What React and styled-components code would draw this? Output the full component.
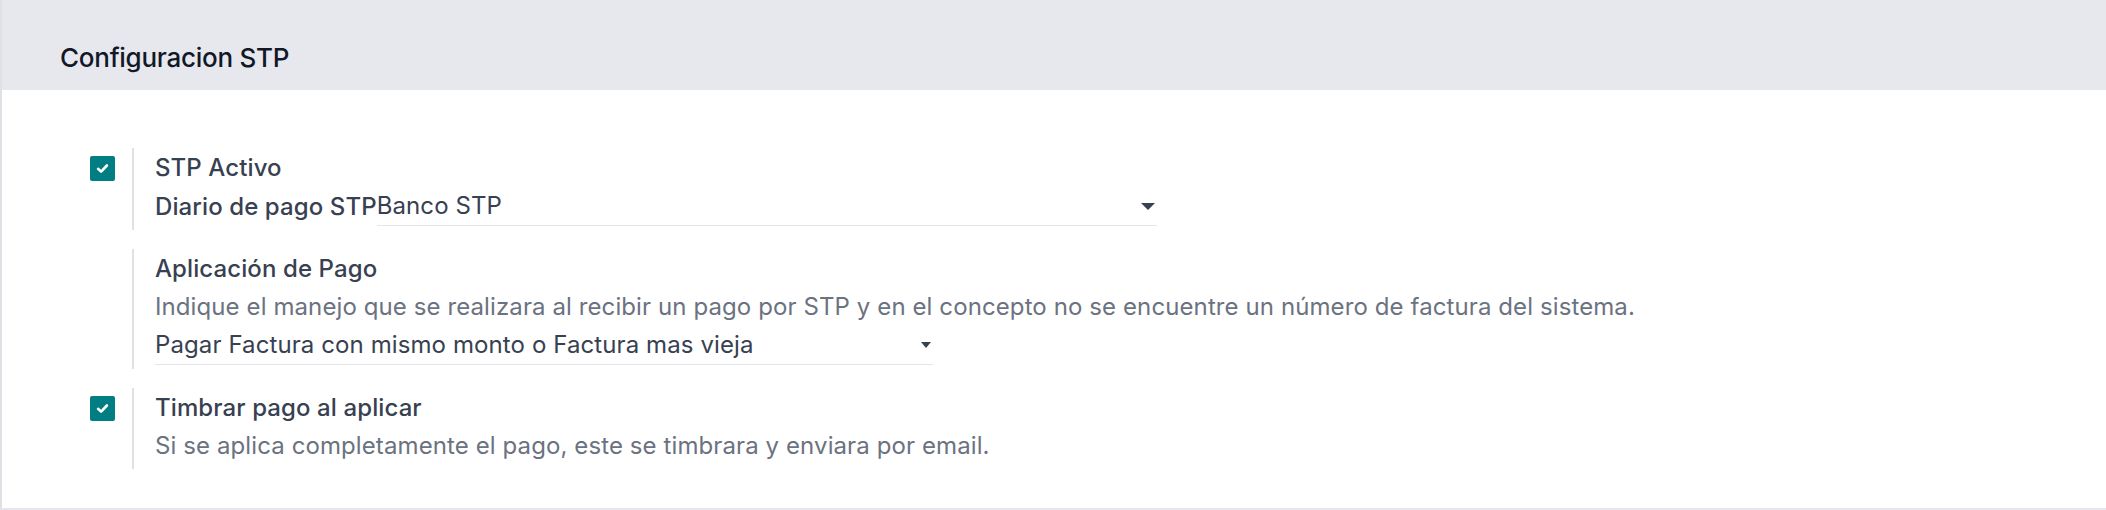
import styled, { createGlobalStyle } from "styled-components";

const GlobalStyle = createGlobalStyle`
  html, body {
    margin: 0;
    padding: 0;
    background: #ffffff;
  }
  body {
    font-family: Inter, "Noto Sans", "Liberation Sans", sans-serif;
    -webkit-font-smoothing: antialiased;
  }
`;

const settings = [
  {
    id: "stp_active",
    checkbox: true,
    label: "STP Activo",
    field: { label: "Diario de pago STP", value: "Banco STP" },
  },
  {
    id: "payment_app",
    checkbox: false,
    label: "Aplicación de Pago",
    help: "Indique el manejo que se realizara al recibir un pago por STP y en el concepto no se encuentre un número de factura del sistema.",
    select: "Pagar Factura con mismo monto o Factura mas vieja",
  },
  {
    id: "stamp_payment",
    checkbox: true,
    label: "Timbrar pago al aplicar",
    help: "Si se aplica completamente el pago, este se timbrara y enviara por email.",
  },
];

const CheckIcon = () => (
  <svg width="15" height="15" viewBox="0 0 16 16" fill="none">
    <path
      d="M3.3 8.3 6.5 11.3 12.7 4.8"
      stroke="#ffffff"
      strokeWidth="2.8"
      strokeLinecap="round"
      strokeLinejoin="round"
    />
  </svg>
);

const App = () => {
  return (
    <>
      <GlobalStyle />
      <Panel>
        <Header>
          <Title>Configuracion STP</Title>
        </Header>
        <Body>
          {settings.map((s) => (
            <SettingBox key={s.id}>
              <LeftPane>
                {s.checkbox && (
                  <Checkbox>
                    <CheckIcon />
                  </Checkbox>
                )}
              </LeftPane>
              <RightPane>
                <Label>{s.label}</Label>
                {s.help && <Help>{s.help}</Help>}
                {s.field && (
                  <FieldRow>
                    <FieldLabel>{s.field.label}</FieldLabel>
                    <Select $width={780}>
                      <SelectValue>{s.field.value}</SelectValue>
                      <Caret />
                    </Select>
                  </FieldRow>
                )}
                {s.select && (
                  <FieldRow>
                    <Select $width={778}>
                      <SelectValue>{s.select}</SelectValue>
                      <Caret $small />
                    </Select>
                  </FieldRow>
                )}
              </RightPane>
            </SettingBox>
          ))}
        </Body>
      </Panel>
    </>
  );
};

export default App;

const Panel = styled.div`
  box-sizing: border-box;
  height: 510px;
  border-left: 2px solid #dfe1e6;
  border-bottom: 2px solid #e6e6ee;
  display: flex;
  flex-direction: column;
`;

const Header = styled.div`
  box-sizing: border-box;
  height: 90px;
  background: #e7e8ee;
  padding: 42px 0 0 58px;
`;

const Title = styled.div`
  font-size: 26px;
  line-height: 31px;
  font-weight: 500;
  color: #111827;
  letter-spacing: -0.01em;
`;

const Body = styled.div`
  padding: 58px 0 0 58px;
  display: flex;
  flex-direction: column;
  gap: 19px;
`;

const SettingBox = styled.div`
  display: flex;
`;

const LeftPane = styled.div`
  width: 72px;
  flex-shrink: 0;
  padding-left: 30px;
  padding-top: 8px;
  box-sizing: border-box;
`;

const Checkbox = styled.div`
  width: 25px;
  height: 25px;
  border-radius: 2px;
  background: #017e84;
  display: flex;
  align-items: center;
  justify-content: center;
`;

const RightPane = styled.div`
  border-left: 2px solid #dfe1e6;
  padding: 1px 0 4px 21px;
  display: flex;
  flex-direction: column;
`;

const Label = styled.div`
  font-size: 24px;
  line-height: 38px;
  font-weight: 500;
  color: #374151;
  letter-spacing: 0.1px;
`;

const Help = styled.div`
  font-size: 24px;
  line-height: 38px;
  color: #6b7280;
  letter-spacing: 0.1px;
`;

const FieldRow = styled.div`
  display: flex;
  align-items: flex-end;
`;

const FieldLabel = styled.div`
  font-size: 24px;
  line-height: 38px;
  font-weight: 500;
  color: #374151;
  white-space: nowrap;
  letter-spacing: 0.1px;
`;

const Select = styled.div`
  width: ${(p) => p.$width}px;
  display: flex;
  align-items: center;
  justify-content: space-between;
  border-bottom: 1.5px solid #e3e5ea;
`;

const SelectValue = styled.span`
  font-size: 24px;
  line-height: 38px;
  color: #374151;
  letter-spacing: 0.1px;
`;

const Caret = styled.span`
  width: 0;
  height: 0;
  margin-right: 2px;
  border-left: ${(p) => (p.$small ? "5px" : "7px")} solid transparent;
  border-right: ${(p) => (p.$small ? "5px" : "7px")} solid transparent;
  border-top: ${(p) => (p.$small ? "6px" : "7px")} solid #374151;
`;
